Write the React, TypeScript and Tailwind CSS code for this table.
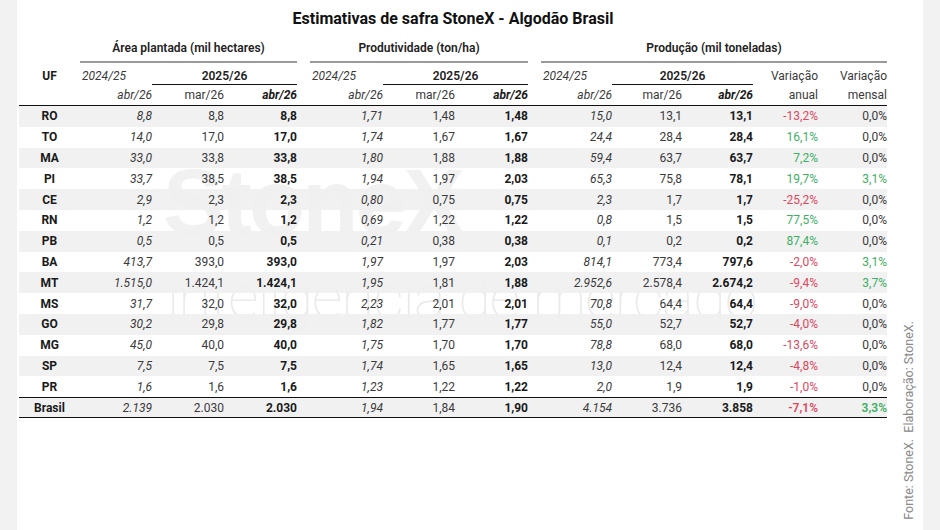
import React from "react";

type Row = { uf: string; v: string[]; a: string; m: string };

const rows: Row[] = [
  { uf: "RO", v: ["8,8", "8,8", "8,8", "1,71", "1,48", "1,48", "15,0", "13,1", "13,1"], a: "-13,2%", m: "0,0%" },
  { uf: "TO", v: ["14,0", "17,0", "17,0", "1,74", "1,67", "1,67", "24,4", "28,4", "28,4"], a: "16,1%", m: "0,0%" },
  { uf: "MA", v: ["33,0", "33,8", "33,8", "1,80", "1,88", "1,88", "59,4", "63,7", "63,7"], a: "7,2%", m: "0,0%" },
  { uf: "PI", v: ["33,7", "38,5", "38,5", "1,94", "1,97", "2,03", "65,3", "75,8", "78,1"], a: "19,7%", m: "3,1%" },
  { uf: "CE", v: ["2,9", "2,3", "2,3", "0,80", "0,75", "0,75", "2,3", "1,7", "1,7"], a: "-25,2%", m: "0,0%" },
  { uf: "RN", v: ["1,2", "1,2", "1,2", "0,69", "1,22", "1,22", "0,8", "1,5", "1,5"], a: "77,5%", m: "0,0%" },
  { uf: "PB", v: ["0,5", "0,5", "0,5", "0,21", "0,38", "0,38", "0,1", "0,2", "0,2"], a: "87,4%", m: "0,0%" },
  { uf: "BA", v: ["413,7", "393,0", "393,0", "1,97", "1,97", "2,03", "814,1", "773,4", "797,6"], a: "-2,0%", m: "3,1%" },
  { uf: "MT", v: ["1.515,0", "1.424,1", "1.424,1", "1,95", "1,81", "1,88", "2.952,6", "2.578,4", "2.674,2"], a: "-9,4%", m: "3,7%" },
  { uf: "MS", v: ["31,7", "32,0", "32,0", "2,23", "2,01", "2,01", "70,8", "64,4", "64,4"], a: "-9,0%", m: "0,0%" },
  { uf: "GO", v: ["30,2", "29,8", "29,8", "1,82", "1,77", "1,77", "55,0", "52,7", "52,7"], a: "-4,0%", m: "0,0%" },
  { uf: "MG", v: ["45,0", "40,0", "40,0", "1,75", "1,70", "1,70", "78,8", "68,0", "68,0"], a: "-13,6%", m: "0,0%" },
  { uf: "SP", v: ["7,5", "7,5", "7,5", "1,74", "1,65", "1,65", "13,0", "12,4", "12,4"], a: "-4,8%", m: "0,0%" },
  { uf: "PR", v: ["1,6", "1,6", "1,6", "1,23", "1,22", "1,22", "2,0", "1,9", "1,9"], a: "-1,0%", m: "0,0%" },
];

const brasil: Row = { uf: "Brasil", v: ["2.139", "2.030", "2.030", "1,94", "1,84", "1,90", "4.154", "3.736", "3.858"], a: "-7,1%", m: "3,3%" };

const GRID =
  "grid grid-cols-[61px_72px_72px_73px_13px_73px_72px_73px_13px_71px_70px_71px_65px_69px]";

const RED = "text-[#e0475c]";
const GREEN = "text-[#3caf62]";

function valClass(i: number) {
  const k = i % 3;
  if (k === 0) return "italic text-[#3a3a3a]";
  if (k === 1) return "text-[#3a3a3a]";
  return "font-bold text-[#1a1a1a]";
}

function DataRow({ r, gray, total }: { r: Row; gray: boolean; total?: boolean }) {
  const cells: React.ReactNode[] = [];
  r.v.forEach((x, i) => {
    if (i === 3 || i === 6) cells.push(<div key={"g" + i} />);
    cells.push(
      <div key={i} className={"text-right " + valClass(i)}>
        {x}
      </div>
    );
  });
  const aColor = r.a.startsWith("-") ? RED : GREEN;
  const mColor = r.m === "0,0%" ? "text-[#3a3a3a]" : GREEN;
  return (
    <div
      className={
        GRID +
        " items-center " +
        (total ? "h-[21px] border-t border-b-[1.5px] border-[#111] " : "h-[20.8px] ") +
        (gray ? "bg-[#efeff1]/90" : "bg-transparent")
      }
    >
      <div className="text-center font-bold text-[#1a1a1a]">{r.uf}</div>
      {cells}
      <div className={"text-right " + aColor + (total ? " font-semibold" : "")}>{r.a}</div>
      <div className={"text-right " + mColor + (total ? " font-semibold" : "")}>{r.m}</div>
    </div>
  );
}

export default function App() {
  return (
    <div className="w-[940px] h-[530px] bg-[#f2f2f2] overflow-hidden font-['Roboto',sans-serif] text-[12px] text-[#222]">
      <div className="ml-[17px] w-[906px] h-[530px] bg-white flex relative">
        {/* watermark */}
        <div className="absolute left-[146px] top-[156px] pointer-events-none select-none text-[92px] leading-none font-bold font-['Liberation_Sans',sans-serif] text-[#dedede] tracking-[-3px] opacity-40">
          StoneX
        </div>
        <div className="absolute left-[150px] top-[268px] pointer-events-none select-none text-[60px] leading-none font-thin font-['Roboto',sans-serif] text-[#d6d6d6] tracking-[-1px] opacity-50">
          inteligência de mercado
        </div>

        <div className="w-[868px] ml-[2px] relative">
          <div className="h-[36px] flex items-center justify-center text-[16px] font-bold text-[#111] pt-[1px]">
            Estimativas de safra StoneX - Algodão Brasil
          </div>
          {/* group headers */}
          <div className={GRID + " h-[27px] font-semibold text-[#222]"}>
            <div />
            <div className="col-span-3 flex items-center justify-center border-b-2 border-[#9a9a9a] pb-[2px]">
              Área plantada (mil hectares)
            </div>
            <div />
            <div className="col-span-3 flex items-center justify-center border-b-2 border-[#9a9a9a] pb-[2px]">
              Produtividade (ton/ha)
            </div>
            <div />
            <div className="col-span-5 flex items-center justify-center border-b-2 border-[#9a9a9a] pb-[2px]">
              Produção (mil toneladas)
            </div>
          </div>
          {/* year row */}
          <div className={GRID + " h-[22px] items-end"}>
            <div className="text-center font-bold text-[#1a1a1a] self-center pt-[3px]">UF</div>
            <div className="italic text-[#3a3a3a] pl-[2px] self-center pt-[3px]">2024/25</div>
            <div className="col-span-2 text-center font-semibold text-[#222] border-b border-[#111] h-[18px] leading-[18px]">
              2025/26
            </div>
            <div />
            <div className="italic text-[#3a3a3a] pl-[2px] self-center pt-[3px]">2024/25</div>
            <div className="col-span-2 text-center font-semibold text-[#222] border-b border-[#111] h-[18px] leading-[18px]">
              2025/26
            </div>
            <div />
            <div className="italic text-[#3a3a3a] pl-[2px] self-center pt-[3px]">2024/25</div>
            <div className="col-span-2 text-center font-semibold text-[#222] border-b border-[#111] h-[18px] leading-[18px]">
              2025/26
            </div>
            <div className="text-right text-[#3a3a3a] self-center pt-[3px]">Variação</div>
            <div className="text-right text-[#3a3a3a] self-center pt-[3px]">Variação</div>
          </div>
          {/* month row */}
          <div className={GRID + " h-[21px] items-center border-b-[1.5px] border-[#111]"}>
            <div />
            <div className="text-right italic text-[#3a3a3a]">abr/26</div>
            <div className="text-right text-[#3a3a3a]">mar/26</div>
            <div className="text-right italic font-bold text-[#1a1a1a]">abr/26</div>
            <div />
            <div className="text-right italic text-[#3a3a3a]">abr/26</div>
            <div className="text-right text-[#3a3a3a]">mar/26</div>
            <div className="text-right italic font-bold text-[#1a1a1a]">abr/26</div>
            <div />
            <div className="text-right italic text-[#3a3a3a]">abr/26</div>
            <div className="text-right text-[#3a3a3a]">mar/26</div>
            <div className="text-right italic font-bold text-[#1a1a1a]">abr/26</div>
            <div className="text-right text-[#3a3a3a]">anual</div>
            <div className="text-right text-[#3a3a3a]">mensal</div>
          </div>
          {rows.map((r, i) => (
            <DataRow key={r.uf} r={r} gray={i % 2 === 0} />
          ))}
          <DataRow r={brasil} gray total />
        </div>

        <div className="flex-1 flex items-end justify-center pb-[10px] pl-[8px]">
          <div className="[writing-mode:vertical-rl] rotate-180 text-[12.5px] text-[#8a8a8a] whitespace-nowrap">
            Fonte: StoneX.&nbsp; Elaboração: StoneX.
          </div>
        </div>
      </div>
    </div>
  );
}
